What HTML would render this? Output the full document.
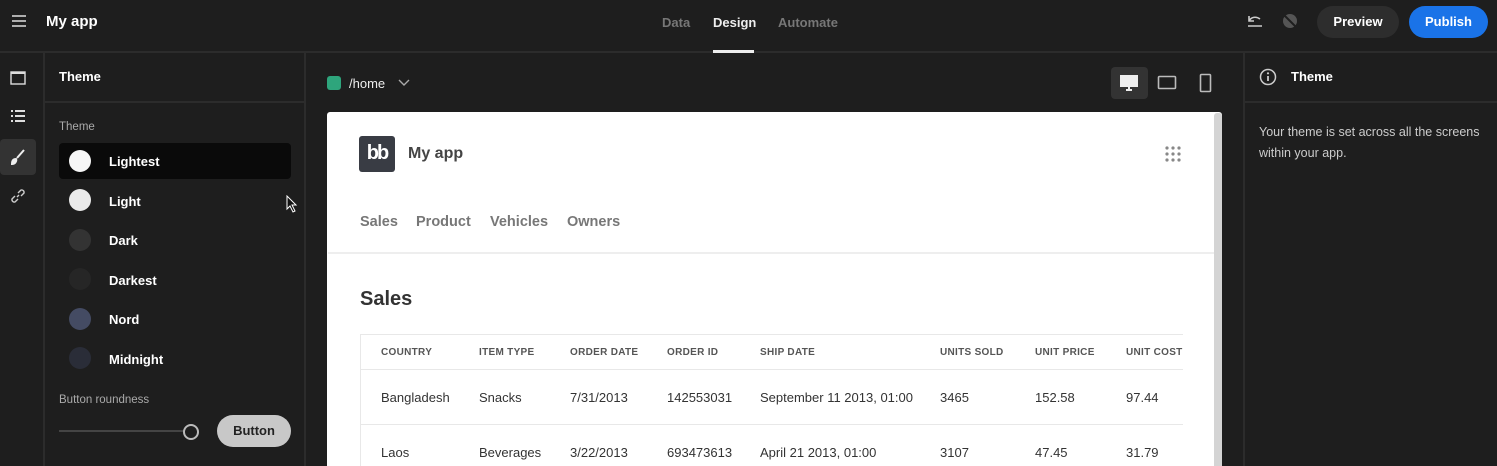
<!DOCTYPE html>
<html><head><meta charset="utf-8"><style>
*{box-sizing:border-box;margin:0;padding:0}
html,body{width:1497px;height:466px;overflow:hidden}
body{background:#1e1e1e;font-family:"Liberation Sans",sans-serif;color:#fff;position:relative}
.a{position:absolute;white-space:nowrap}
.b{font-weight:bold}
.hd{font-size:10px;font-weight:bold;color:#555;letter-spacing:0.3px;top:347px}
.c1{font-size:13px;color:#333;top:390px}
.c2{font-size:13px;color:#333;top:445px}
</style></head><body>
<div class="a" style="left:0;top:51px;width:1497px;height:2px;background:#2c2c2c"></div>
<svg class="a" style="left:11px;top:14px" width="16" height="14"><path d="M1 2H15M1 7H15M1 12H15" stroke="#ddd" stroke-width="1.6"/></svg>
<div class="a b" style="left:46px;top:13px;font-size:15px">My app</div>
<div class="a b" style="left:662px;top:15px;font-size:13px;color:#777">Data</div>
<div class="a b" style="left:713px;top:15px;font-size:13px;color:#eee">Design</div>
<div class="a" style="left:713px;top:50px;width:41px;height:3px;background:#eee"></div>
<div class="a b" style="left:778px;top:15px;font-size:13px;color:#777">Automate</div>
<svg class="a" style="left:1245px;top:12px" width="20" height="18"><path d="M4 4V9H9M4 9C6 5 11 4 15 7M3 14H17" stroke="#ccc" stroke-width="1.6" fill="none"/></svg>
<svg class="a" style="left:1280px;top:11px" width="20" height="20"><circle cx="10" cy="10" r="7" fill="#555"/><path d="M3 3L17 17" stroke="#1e1e1e" stroke-width="2"/></svg>
<div class="a b" style="left:1317px;top:6px;width:82px;height:32px;border-radius:16px;background:#2d2d2d;font-size:13px;text-align:center;line-height:32px">Preview</div>
<div class="a b" style="left:1409px;top:6px;width:79px;height:32px;border-radius:16px;background:#1a73e8;font-size:13px;text-align:center;line-height:32px">Publish</div>
<div class="a" style="left:43px;top:53px;width:2px;height:413px;background:#2c2c2c"></div>
<svg class="a" style="left:10px;top:70px" width="16" height="16"><rect x="1" y="2" width="14" height="12" stroke="#ddd" stroke-width="1.4" fill="none"/><path d="M1 3H15" stroke="#ddd" stroke-width="2"/></svg>
<svg class="a" style="left:10px;top:109px" width="16" height="16"><path d="M1 2H3M5 2H15M1 7H3M5 7H15M1 12H3M5 12H15" stroke="#ddd" stroke-width="2"/></svg>
<div class="a" style="left:0;top:139px;width:36px;height:36px;border-radius:4px;background:#333"></div>
<svg class="a" style="left:10px;top:149px" width="16" height="16"><path d="M14 1L7 9M2 15C2 11 4 10 6 10C7 12 5 15 2 15Z" stroke="#eee" stroke-width="2" fill="#eee"/></svg>
<svg class="a" style="left:10px;top:188px" width="16" height="16"><path d="M7 9L9 7M5 8L2 11A2.5 2.5 0 0 0 5 14L8 11M8 5L11 2A2.5 2.5 0 0 1 14 5L11 8" stroke="#ccc" stroke-width="1.4" fill="none"/></svg>
<div class="a" style="left:304px;top:53px;width:2px;height:413px;background:#2c2c2c"></div>
<div class="a" style="left:45px;top:101px;width:260px;height:2px;background:#2c2c2c"></div>
<div class="a b" style="left:59px;top:69px;font-size:13px">Theme</div>
<div class="a" style="left:59px;top:121px;font-size:11.5px;color:#aaa">Theme</div>
<div class="a" style="left:59px;top:143px;width:232px;height:36px;border-radius:4px;background:#0a0a0a"></div>
<div class="a" style="left:69px;top:150px;width:22px;height:22px;border-radius:50%;background:#f6f6f6"></div>
<div class="a" style="left:69px;top:189px;width:22px;height:22px;border-radius:50%;background:#eaeaea"></div>
<div class="a" style="left:69px;top:229px;width:22px;height:22px;border-radius:50%;background:#333"></div>
<div class="a" style="left:69px;top:268px;width:22px;height:22px;border-radius:50%;background:#262626"></div>
<div class="a" style="left:69px;top:308px;width:22px;height:22px;border-radius:50%;background:#444b63"></div>
<div class="a" style="left:69px;top:347px;width:22px;height:22px;border-radius:50%;background:#2a2d38"></div>
<div class="a b" style="left:109px;top:154px;font-size:13px">Lightest</div>
<div class="a b" style="left:109px;top:194px;font-size:13px">Light</div>
<div class="a b" style="left:109px;top:233px;font-size:13px">Dark</div>
<div class="a b" style="left:109px;top:273px;font-size:13px">Darkest</div>
<div class="a b" style="left:109px;top:312px;font-size:13px">Nord</div>
<div class="a b" style="left:109px;top:352px;font-size:13px">Midnight</div>
<svg class="a" style="left:286px;top:195px" width="12" height="18"><path d="M1 1V14L4 11L7 17L9 16L6 10H10Z" fill="#111" stroke="#fff" stroke-width="1"/></svg>
<div class="a" style="left:59px;top:394px;font-size:11.5px;color:#aaa">Button roundness</div>
<div class="a" style="left:59px;top:430px;width:125px;height:2px;background:#444"></div>
<div class="a" style="left:183px;top:424px;width:16px;height:16px;border-radius:50%;border:2px solid #bbb;background:#1e1e1e"></div>
<div class="a b" style="left:217px;top:415px;width:74px;height:32px;border-radius:16px;background:#c8c8c8;color:#222;font-size:13px;text-align:center;line-height:32px">Button</div>
<div class="a" style="left:327px;top:76px;width:14px;height:14px;border-radius:3px;background:#2ea57c"></div>
<div class="a" style="left:349px;top:76px;font-size:13px;color:#eee">/home</div>
<svg class="a" style="left:398px;top:79px" width="12" height="8"><path d="M1 1L6 6L11 1" stroke="#aaa" stroke-width="1.4" fill="none"/></svg>
<div class="a" style="left:1111px;top:67px;width:37px;height:32px;border-radius:4px;background:#333"></div>
<svg class="a" style="left:1119px;top:74px" width="20" height="18"><rect x="1" y="1" width="18" height="12" fill="#eee"/><path d="M7 16H13M10 13V16" stroke="#eee" stroke-width="2"/></svg>
<svg class="a" style="left:1157px;top:74px" width="20" height="18"><rect x="1.5" y="2.5" width="17" height="12" rx="1" stroke="#bbb" stroke-width="1.6" fill="none"/></svg>
<svg class="a" style="left:1199px;top:73px" width="14" height="20"><rect x="1.5" y="1.5" width="10" height="17" rx="1" stroke="#bbb" stroke-width="1.6" fill="none"/></svg>
<div class="a" style="left:327px;top:112px;width:895px;height:354px;background:#fff;border-radius:3px 3px 0 0;overflow:hidden">
<div style="position:absolute;left:887px;top:1px;width:8px;height:360px;background:#d4d4d4;border-radius:3px"></div>
</div>
<div class="a" style="left:359px;top:136px;width:36px;height:36px;border-radius:3px;background:#393c44;color:#fff;font-weight:bold;font-size:20px;text-align:center;line-height:35px;letter-spacing:-2px">bb</div>
<div class="a b" style="left:408px;top:145px;font-size:16px;color:#444">My app</div>
<svg class="a" style="left:1164px;top:145px" width="18" height="18" fill="#888"><circle cx="3" cy="3" r="1.6"/><circle cx="9" cy="3" r="1.6"/><circle cx="15" cy="3" r="1.6"/><circle cx="3" cy="9" r="1.6"/><circle cx="9" cy="9" r="1.6"/><circle cx="15" cy="9" r="1.6"/><circle cx="3" cy="15" r="1.6"/><circle cx="9" cy="15" r="1.6"/><circle cx="15" cy="15" r="1.6"/></svg>
<div class="a b" style="left:360px;top:214px;font-size:14.5px;color:#777">Sales</div>
<div class="a b" style="left:416px;top:214px;font-size:14.5px;color:#777">Product</div>
<div class="a b" style="left:490px;top:214px;font-size:14.5px;color:#777">Vehicles</div>
<div class="a b" style="left:567px;top:214px;font-size:14.5px;color:#777">Owners</div>
<div class="a" style="left:328px;top:252px;width:886px;height:2px;background:#eee"></div>
<div class="a b" style="left:360px;top:288px;font-size:20px;color:#333">Sales</div>
<div class="a" style="left:360px;top:334px;width:823px;height:140px;border:1px solid #e8e8e8;border-right:none"></div>
<div class="a" style="left:361px;top:369px;width:822px;height:1px;background:#e8e8e8"></div>
<div class="a" style="left:361px;top:424px;width:822px;height:1px;background:#e8e8e8"></div>
<div class="a" style="left:361px;top:335px;width:822px;height:131px;overflow:hidden">
<div style="position:relative;left:-361px;top:-335px">
<div class="a hd" style="left:381px">COUNTRY</div>
<div class="a hd" style="left:479px">ITEM TYPE</div>
<div class="a hd" style="left:570px">ORDER DATE</div>
<div class="a hd" style="left:667px">ORDER ID</div>
<div class="a hd" style="left:760px">SHIP DATE</div>
<div class="a hd" style="left:940px">UNITS SOLD</div>
<div class="a hd" style="left:1035px">UNIT PRICE</div>
<div class="a hd" style="left:1126px">UNIT COST</div>
<div class="a c1" style="left:381px">Bangladesh</div>
<div class="a c1" style="left:479px">Snacks</div>
<div class="a c1" style="left:570px">7/31/2013</div>
<div class="a c1" style="left:667px">142553031</div>
<div class="a c1" style="left:760px">September 11 2013, 01:00</div>
<div class="a c1" style="left:940px">3465</div>
<div class="a c1" style="left:1035px">152.58</div>
<div class="a c1" style="left:1126px">97.44</div>
<div class="a c2" style="left:381px">Laos</div>
<div class="a c2" style="left:479px">Beverages</div>
<div class="a c2" style="left:570px">3/22/2013</div>
<div class="a c2" style="left:667px">693473613</div>
<div class="a c2" style="left:760px">April 21 2013, 01:00</div>
<div class="a c2" style="left:940px">3107</div>
<div class="a c2" style="left:1035px">47.45</div>
<div class="a c2" style="left:1126px">31.79</div>
</div></div>
<div class="a" style="left:1243px;top:53px;width:2px;height:413px;background:#2c2c2c"></div>
<div class="a" style="left:1245px;top:101px;width:252px;height:2px;background:#2c2c2c"></div>
<svg class="a" style="left:1259px;top:68px" width="18" height="18"><circle cx="9" cy="9" r="7.5" stroke="#ccc" stroke-width="1.5" fill="none"/><path d="M9 8V13" stroke="#ccc" stroke-width="1.8"/><circle cx="9" cy="5.3" r="1.1" fill="#ccc"/></svg>
<div class="a b" style="left:1291px;top:69px;font-size:13px">Theme</div>
<div class="a" style="left:1259px;top:122px;width:230px;font-size:12.5px;line-height:21px;color:#ccc;white-space:normal">Your theme is set across all the screens within your app.</div>
</body></html>
